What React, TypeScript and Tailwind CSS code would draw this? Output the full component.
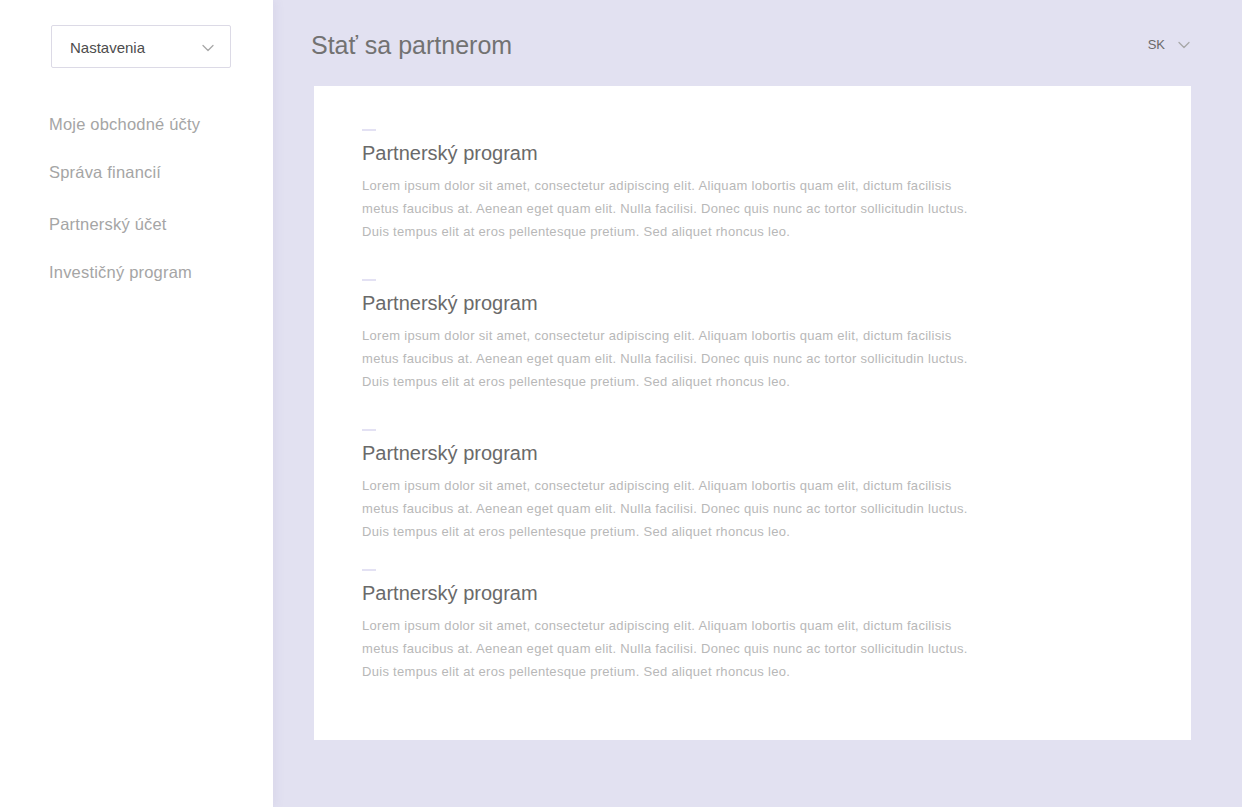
import React from "react";

const Chevron = ({ className }: { className?: string }) => (
  <svg className={className} viewBox="0 0 12 8" fill="none">
    <path d="M1 1.5 L6 6.5 L11 1.5" stroke="currentColor" strokeWidth="1.3" strokeLinecap="round" strokeLinejoin="round" />
  </svg>
);

const body = [
  "Lorem ipsum dolor sit amet, consectetur adipiscing elit. Aliquam lobortis quam elit, dictum facilisis",
  "metus faucibus at. Aenean eget quam elit. Nulla facilisi. Donec quis nunc ac tortor sollicitudin luctus.",
  "Duis tempus elit at eros pellentesque pretium. Sed aliquet rhoncus leo.",
];

const Section = ({ mt }: { mt: string }) => (
  <div className={mt}>
    <div className="h-[2px] w-[14px] bg-[#e3e1f3]" />
    <h2 className="mt-[10px] text-[20px] leading-[24px] text-[#6a6a6a]">Partnerský program</h2>
    <div className="mt-[9px] text-[13px] leading-[23px] tracking-[0.3px] text-[#b8b8b8]">
      {body.map((l, i) => (
        <div key={i} className="whitespace-nowrap">{l}</div>
      ))}
    </div>
  </div>
);

export default function App() {
  return (
    <div
      className="flex h-[807px] w-full overflow-hidden"
      style={{ fontFamily: '"Liberation Sans", Arial, sans-serif' }}
    >
      <aside className="relative z-10 w-[273px] shrink-0 bg-white pt-[25px] shadow-[3px_0_10px_rgba(80,70,140,0.06)]">
        <div className="ml-[51px] flex h-[43px] w-[180px] items-center justify-between rounded-[2px] border border-[#dcdae6] pl-[18px] pr-[16px] pt-[3px]">
          <span className="text-[15px] text-[#4d4d4d]">Nastavenia</span>
          <Chevron className="h-[8px] w-[12px] text-[#a8a8a8]" />
        </div>
        <nav className="mt-[44px] pl-[49px] text-[16.5px] leading-[24px] tracking-[0.2px] text-[#a5a5a5]">
          <div>Moje obchodné účty</div>
          <div className="mt-[24px]">Správa financií</div>
          <div className="mt-[28px]">Partnerský účet</div>
          <div className="mt-[24px]">Investičný program</div>
        </nav>
      </aside>
      <main className="flex-1 bg-[#e2e1f1]">
        <header className="flex h-[86px] items-start justify-between pl-[38px] pr-[52px] pt-[30px]">
          <h1 className="text-[25px] leading-[30px] text-[#727272]">Stať sa partnerom</h1>
          <div className="mt-[7px] flex items-center gap-[13px]">
            <span className="text-[13px] leading-[16px] text-[#6a6a6a]">SK</span>
            <Chevron className="h-[8px] w-[12px] text-[#a8a8a8]" />
          </div>
        </header>
        <section className="ml-[41px] mr-[51px] h-[654px] bg-white pl-[48px] pt-[43px]">
          <Section mt="mt-0" />
          <Section mt="mt-[36px]" />
          <Section mt="mt-[36px]" />
          <Section mt="mt-[26px]" />
        </section>
      </main>
    </div>
  );
}
